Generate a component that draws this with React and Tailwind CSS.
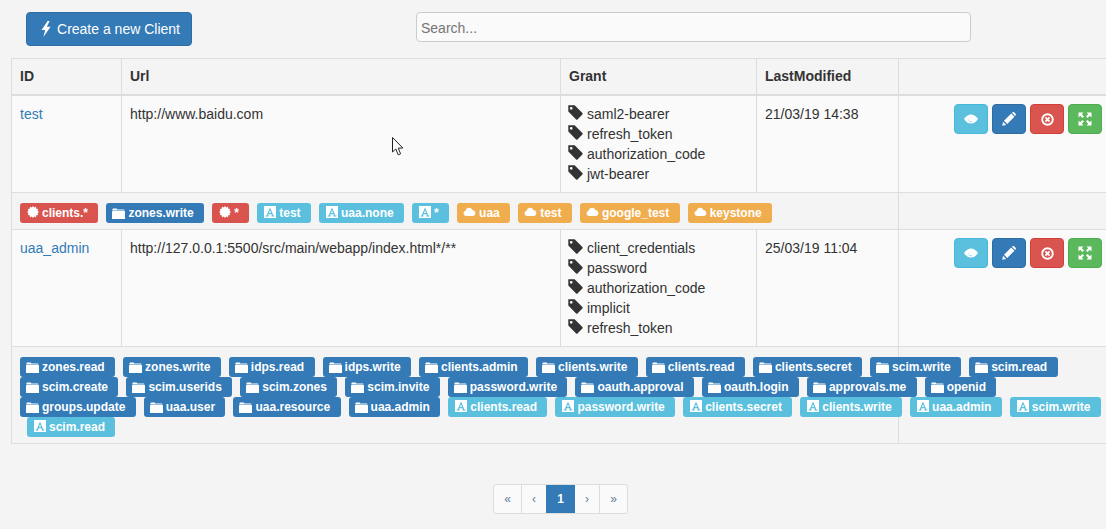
const Bolt = ({ className }) => (
  <svg viewBox="0 0 12 16" className={className} fill="currentColor">
    <path d="M7.6 0 L1.6 9 L5.2 9 L3.4 16 L10.6 5.8 L6.8 5.8 L9.6 0 Z" />
  </svg>
);

const Tag = () => (
  <svg viewBox="0 0 15 15" className="w-[15px] h-[15px] shrink-0 -ml-px -mt-[3px]" fill="#333">
    <path d="M0.3 0.3 L6.6 0.3 L14.4 8.1 Q15 8.8 14.4 9.5 L9.5 14.4 Q8.8 15 8.1 14.4 L0.3 6.6 Z M3.2 1.9 A1.4 1.4 0 1 0 3.2 4.7 A1.4 1.4 0 1 0 3.2 1.9 Z" fillRule="evenodd" />
  </svg>
);

const Folder = () => (
  <svg viewBox="0 0 13 11" className="w-[13px] h-[11px] shrink-0 -ml-px" fill="#fff">
    <path d="M0.4 1.6 Q0.4 0.6 1.4 0.6 L4.6 0.6 L5.4 1.6 L11.6 1.6 Q12.6 1.6 12.6 2.4 L0.4 2.4 Z" />
    <rect x="0" y="3" width="13" height="8" rx="0.6" />
  </svg>
);

const Cert = () => (
  <svg viewBox="0 0 12 12" className="w-[12px] h-[12px] shrink-0 -mt-[2px]" fill="#fff">
    <path d="M6 0 L7.2 1.5 L9 .8 L9.3 2.7 L11.2 3 L10.5 4.8 L12 6 L10.5 7.2 L11.2 9 L9.3 9.3 L9 11.2 L7.2 10.5 L6 12 L4.8 10.5 L3 11.2 L2.7 9.3 L.8 9 L1.5 7.2 L0 6 L1.5 4.8 L.8 3 L2.7 2.7 L3 .8 L4.8 1.5 Z" />
  </svg>
);

const FontBox = ({ bg }) => (
  <svg viewBox="0 0 12 12" className="w-[12px] h-[12px] shrink-0 -mt-[2px]">
    <rect width="12" height="12" fill="#fff" />
    <path d="M6 1.4 L2.6 9.6 L1.6 9.6 L1.6 10.6 L4.6 10.6 L4.6 9.6 L4 9.6 L4.5 8.2 L7.5 8.2 L8 9.6 L7.4 9.6 L7.4 10.6 L10.4 10.6 L10.4 9.6 L9.4 9.6 L6 1.4 Z M6 4.2 L7 7 L5 7 Z" fill={bg} fillRule="evenodd" />
  </svg>
);

const Cloud = () => (
  <svg viewBox="0 0 13 9" className="w-[13px] h-[9px] shrink-0 -ml-px -mt-[4px]" fill="#fff">
    <path d="M3 9 A2.7 2.7 0 0 1 2.5 3.7 A3.6 3.6 0 0 1 9.4 2.9 A3.1 3.1 0 0 1 10 9 Z" />
  </svg>
);

const labelColors = {
  danger: "bg-[#d9534f]",
  primary: "bg-[#337ab7]",
  info: "bg-[#5bc0de]",
  warning: "bg-[#f0ad4e]",
};

const Label = ({ kind, text, className = "" }) => (
  <span
    className={`inline-flex items-center h-5 pl-[7px] pr-[10.4px] rounded-[3px] text-white text-xs font-bold leading-5 gap-[3px] ${labelColors[kind]} ${className}`}
  >
    {kind === "danger" && <Cert />}
    {kind === "primary" && <Folder />}
    {kind === "info" && <FontBox bg="#5bc0de" />}
    {kind === "warning" && <Cloud />}
    {text}
  </span>
);

const ActionButtons = () => (
  <div className="flex gap-1 pl-[47px]">
    <button className="w-[34px] h-[30px] flex items-center justify-center rounded-[4px] border border-[#46b8da] bg-[#5bc0de]">
      <svg viewBox="0 0 14 10" className="w-[14px] h-[10px]">
        <path d="M0 5 Q3 0.4 7 0.4 Q11 0.4 14 5 Q11 9.6 7 9.6 Q3 9.6 0 5 Z" fill="#fff" />
        <path d="M4.6 3.4 A3 3 0 1 0 9.6 3.4 A2.6 2.6 0 0 1 7 7.6 A2.8 2.8 0 0 1 4.6 3.4 Z" fill="#5bc0de" />
      </svg>
    </button>
    <button className="w-[34px] h-[30px] flex items-center justify-center rounded-[4px] border border-[#2e6da4] bg-[#337ab7]">
      <svg viewBox="0 0 14 14" className="w-[14px] h-[14px]" fill="#fff">
        <path d="M0.3 13.7 L1 9.8 L4.2 13 Z M2 8.8 L9.2 1.6 L12.4 4.8 L5.2 12 Z M10 0.8 L11 0 Q11.5 -0.2 12 0.2 L13.8 2 Q14.2 2.5 13.8 3 L13 4 Z" />
      </svg>
    </button>
    <button className="w-[34px] h-[30px] flex items-center justify-center rounded-[4px] border border-[#d43f3a] bg-[#d9534f]">
      <svg viewBox="0 0 14 14" className="w-[13px] h-[13px]" fill="none" stroke="#fff">
        <circle cx="7" cy="7" r="5.7" strokeWidth="2" />
        <path d="M4.8 4.8 L9.2 9.2 M9.2 4.8 L4.8 9.2" strokeWidth="2" />
      </svg>
    </button>
    <button className="w-[34px] h-[30px] flex items-center justify-center rounded-[4px] border border-[#4cae4c] bg-[#5cb85c]">
      <svg viewBox="0 0 14 14" className="w-[14px] h-[14px]" fill="#fff">
        <path d="M0.5 0.5 L5.5 0.5 L3.8 2.2 L6 4.4 L4.4 6 L2.2 3.8 L0.5 5.5 Z" />
        <path d="M13.5 0.5 L13.5 5.5 L11.8 3.8 L9.6 6 L8 4.4 L10.2 2.2 L8.5 0.5 Z" />
        <path d="M0.5 13.5 L0.5 8.5 L2.2 10.2 L4.4 8 L6 9.6 L3.8 11.8 L5.5 13.5 Z" />
        <path d="M13.5 13.5 L8.5 13.5 L10.2 11.8 L8 9.6 L9.6 8 L11.8 10.2 L13.5 8.5 Z" />
      </svg>
    </button>
  </div>
);

const cell = "border border-[#ddd] p-2 align-top";
// labels sit 2px low in their row
const labelCell = "border border-[#ddd] pt-[10px] pb-[6px] px-2 align-top";

const ClientRow = ({ id, url, grants, modified }) => (
  <tr className="bg-[#fafafa]">
    <td className={cell}>
      <a className="text-[#337ab7]">{id}</a>
    </td>
    <td className={cell}>{url}</td>
    <td className={cell}>
      {grants.map((g) => (
        <div key={g} className="flex items-center gap-1 h-5">
          <Tag />
          <span>{g}</span>
        </div>
      ))}
    </td>
    <td className={cell}>{modified}</td>
    <td className={cell}>
      <ActionButtons />
    </td>
  </tr>
);

const firstLabels = [
  ["danger", "clients.*"],
  ["primary", "zones.write"],
  ["danger", "*"],
  ["info", "test"],
  ["info", "uaa.none"],
  ["info", "*"],
  ["warning", "uaa"],
  ["warning", "test"],
  ["warning", "google_test"],
  ["warning", "keystone"],
];

const adminScopes = [
  "zones.read", "zones.write", "idps.read", "idps.write", "clients.admin",
  "clients.write", "clients.read", "clients.secret", "scim.write", "scim.read",
  "scim.create", "scim.userids", "scim.zones", "scim.invite", "password.write",
  "oauth.approval", "oauth.login", "approvals.me", "openid", "groups.update",
  "uaa.user", "uaa.resource", "uaa.admin",
];

const adminAuthorities = [
  "clients.read", "password.write", "clients.secret", "clients.write",
  "uaa.admin", "scim.write",
];

const pageItems = [
  ["«", "w-[27px]"],
  ["‹", "w-[25px]"],
  ["1", "w-[29px]"],
  ["›", "w-[24px]"],
  ["»", "w-[28px]"],
];

const App = () => {
  return (
    <div className="h-screen overflow-hidden bg-[#f4f4f4] text-[#333] text-sm leading-5 font-['Liberation_Sans',Arial,sans-serif]">
      <div className="flex items-start pt-3 pl-[26px]">
        <button className="w-[166px] h-[34px] flex items-center justify-center gap-[5px] pl-[2px] rounded-[4px] border border-[#2e6da4] bg-[#337ab7] text-white">
          <Bolt className="w-[12px] h-[16px]" />
          Create a new Client
        </button>
        <input
          type="text"
          placeholder="Search..."
          className="ml-[224px] w-[555px] h-[30px] px-1 pt-[2px] rounded-[4px] border border-[#ccc] bg-[#fafafa] placeholder:text-[#757575] outline-none"
        />
      </div>

      <table className="mt-3 ml-[11px] w-[1100px] table-fixed border-collapse">
        <colgroup>
          <col className="w-[110px]" />
          <col className="w-[439px]" />
          <col className="w-[196px]" />
          <col className="w-[142px]" />
          <col className="w-[213px]" />
        </colgroup>
        <thead>
          <tr>
            {["ID", "Url", "Grant", "LastModified", ""].map((h, i) => (
              <th key={i} className={`${cell} pt-[7px] border-b-2 text-left font-bold`}>
                {h || "\u00a0"}
              </th>
            ))}
          </tr>
        </thead>
        <tbody>
          <ClientRow
            id="test"
            url="http://www.baidu.com"
            grants={["saml2-bearer", "refresh_token", "authorization_code", "jwt-bearer"]}
            modified="21/03/19 14:38"
          />
          <tr>
            <td colSpan={4} className={labelCell}>
              <div className="flex flex-wrap gap-x-2 w-[1086px]">
                {firstLabels.map(([kind, text], i) => (
                  <Label key={i} kind={kind} text={text} />
                ))}
              </div>
            </td>
            <td className={cell}></td>
          </tr>
          <ClientRow
            id="uaa_admin"
            url="http://127.0.0.1:5500/src/main/webapp/index.html*/**"
            grants={["client_credentials", "password", "authorization_code", "implicit", "refresh_token"]}
            modified="25/03/19 11:04"
          />
          <tr>
            <td colSpan={4} className={labelCell}>
              <div className="flex flex-wrap gap-x-2 w-[1086px]">
                {adminScopes.map((s) => (
                  <Label key={s} kind="primary" text={s} />
                ))}
                {adminAuthorities.map((s) => (
                  <Label key={`info-${s}`} kind="info" text={s} />
                ))}
                <Label kind="info" text="scim.read" className="ml-[7px]" />
              </div>
            </td>
            <td className={cell}></td>
          </tr>
        </tbody>
      </table>

      <div className="flex justify-center pl-[15px] mt-10">
        <div className="flex h-[30px] rounded-[3px] border border-[#ddd] bg-[#fafafa] overflow-hidden text-xs">
          {pageItems.map(([p, w], i) => (
            <span
              key={p}
              className={`${w} flex items-center justify-center ${
                p === "1"
                  ? "bg-[#337ab7] text-white font-bold"
                  : "text-[#5f7f99]"
              } ${i === 1 || i === 4 ? "border-l border-[#ddd]" : ""}`}
            >
              {p}
            </span>
          ))}
        </div>
      </div>

      {/* mouse pointer caught in the screenshot */}
      <svg viewBox="0 0 13 19" className="absolute left-[392px] top-[137px] w-[13px] h-[19px]">
        <path
          d="M0.5 0.5 L0.5 15 L3.8 12 L6.2 17.8 L8.6 16.8 L6.2 11.2 L10.8 11 Z"
          fill="#fff"
          stroke="#222"
          strokeWidth="1"
        />
      </svg>
    </div>
  );
};

export default App;
